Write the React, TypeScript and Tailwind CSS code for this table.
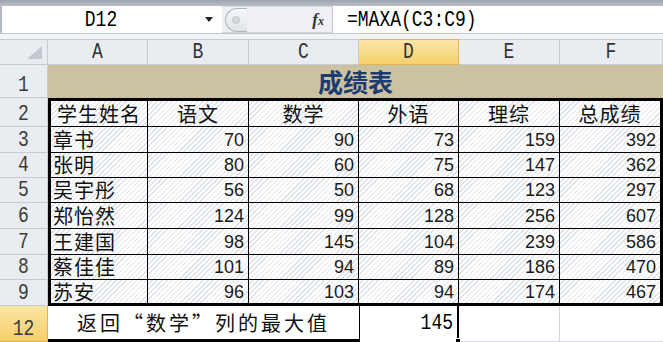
import React from "react";

const HATCH =
  "bg-[repeating-linear-gradient(135deg,#ffffff_0px,#ffffff_2.6px,#dde2e8_2.6px,#dde2e8_3.6px)]";

const COLW = ["w-[100px]", "w-[101px]", "w-[110px]", "w-[100px]", "w-[101px]", "w-[103px]"];
const COLB = [
  "border-l-[3px] border-r border-black",
  "border-r border-black",
  "border-r border-black",
  "border-r border-black",
  "border-r border-black",
  "border-r-[3px] border-black",
];

const MONO = "font-['Liberation_Mono',monospace]";
const CJK = "font-['Noto_Sans_CJK_SC','Noto_Sans',sans-serif]";
const NUM = "font-['Liberation_Sans',Arial,sans-serif]";

type Row = { n: number; h: string; name: string; v: number[]; b: string };

const rows: Row[] = [
  { n: 3, h: "h-[26px]", name: "章书", v: [70, 90, 73, 159, 392], b: "border-b" },
  { n: 4, h: "h-[25px]", name: "张明", v: [80, 60, 75, 147, 362], b: "border-b" },
  { n: 5, h: "h-[25px]", name: "吴宇彤", v: [56, 50, 68, 123, 297], b: "border-b" },
  { n: 6, h: "h-[26px]", name: "郑怡然", v: [124, 99, 128, 256, 607], b: "border-b" },
  { n: 7, h: "h-[26px]", name: "王建国", v: [98, 145, 104, 239, 586], b: "border-b" },
  { n: 8, h: "h-[25px]", name: "蔡佳佳", v: [101, 94, 89, 186, 470], b: "border-b" },
  { n: 9, h: "h-[26px]", name: "苏安", v: [96, 103, 94, 174, 467], b: "border-b-[3px]" },
];

function RowHead({ n, h, hl }: { n: number; h: string; hl?: boolean }) {
  return (
    <div
      className={`${h} w-[48px] shrink-0 flex items-end justify-center pb-[1px] border-r border-b ${
        hl
          ? "bg-gradient-to-b from-[#fbe6a2] to-[#f5cf69] border-[#e0b456]"
          : "bg-[#e9ecf0] border-[#c7ccd3]"
      } text-[#3a3a3a] text-[18px] leading-none ${MONO}`}
    >
      <span className="inline-block scale-y-[1.2] origin-bottom">{n}</span>
    </div>
  );
}

export default function App() {
  const headers = ["学生姓名", "语文", "数学", "外语", "理综", "总成绩"];
  const letters = ["A", "B", "C", "D", "E", "F"];
  return (
    <div className="w-[663px] h-[342px] overflow-hidden bg-white">
      {/* top strip */}
      <div className="h-[6px] bg-gradient-to-b from-[#9ca3ac] to-[#b9bfc7]" />
      {/* formula bar */}
      <div className="h-[28px] flex border-b border-[#c3c8cf] bg-white">
        <div className="w-[222px] flex items-center border-l-2 border-[#b4bac2]">
          <div className={`w-[198px] flex justify-center text-[18px] leading-none text-black ${MONO}`}>
            <span className="inline-block scale-y-[1.2]">D12</span>
          </div>
          <svg width="8" height="5" viewBox="0 0 8 5" className="ml-[5px]">
            <path d="M0 0H8L4 5Z" fill="#222" />
          </svg>
        </div>
        <div className="w-[111px] flex items-center bg-[#eef0f3] border-y border-[#d3d7dd] border-r border-r-[#c3c8cf]">
          <div className="ml-[3px] h-[24px] w-[22px] rounded-l-full border border-r-0 border-[#aeb4bc] bg-gradient-to-b from-[#f7f8fa] to-[#dfe3e8] flex items-center pl-[6px]">
            <div className="w-[8px] h-[8px] rounded-full bg-[#d5d9de] border border-[#c4c9cf]" />
          </div>
          <div className="flex-1" />
          <span className="mr-[8px] font-['Liberation_Serif',serif] italic font-bold text-[17px] text-[#333] leading-none">
            f<span className="text-[12px]">x</span>
          </span>
        </div>
        <div className={`flex-1 flex items-center pl-[14px] text-[18px] leading-none text-black ${MONO}`}>
          <span className="inline-block scale-y-[1.2]">=MAXA(C3:C9)</span>
        </div>
      </div>
      <div className="h-[5px] bg-[#f1f3f6]" />
      {/* column headers */}
      <div className="flex h-[26px]">
        <div className="w-[48px] shrink-0 relative bg-[#e9ecf0] border-r border-b border-t border-[#c7ccd3]">
          <svg width="15" height="13" viewBox="0 0 15 13" className="absolute right-[5px] bottom-[5px]">
            <path d="M0 13H15V0Z" fill="#c4c9cf" />
          </svg>
        </div>
        {letters.map((l, i) => (
          <div
            key={l}
            className={`${COLW[i]} shrink-0 flex items-center justify-center border-r border-b border-t ${
              i === 3
                ? "bg-gradient-to-b from-[#fbe7a6] to-[#f6d06b] border-[#e1b456]"
                : "bg-[#e9ecf0] border-[#c7ccd3]"
            } text-[18px] leading-none text-[#333] ${MONO}`}
          >
            <span className="inline-block scale-y-[1.2]">{l}</span>
          </div>
        ))}
      </div>
      {/* row 1 title */}
      <div className="flex h-[33px]">
        <RowHead n={1} h="h-[33px]" />
        <div className="flex-1 flex items-center justify-center bg-[#cbc3a0]">
          <span className={`text-[25px] font-bold text-[#1e3b70] leading-none ${CJK}`}>成绩表</span>
        </div>
      </div>
      {/* row 2 headers */}
      <div className="flex h-[29px]">
        <RowHead n={2} h="h-[29px]" />
        {headers.map((t, i) => (
          <div
            key={t}
            className={`${COLW[i]} shrink-0 ${COLB[i]} border-t-[3px] border-b ${HATCH} flex items-center justify-center tracking-[1px] text-[20px] leading-none text-[#111] ${CJK}`}
          >
            {t}
          </div>
        ))}
      </div>
      {/* data rows */}
      {rows.map((r) => (
        <div key={r.n} className={`flex ${r.h}`}>
          <RowHead n={r.n} h={r.h} />
          <div
            className={`${COLW[0]} shrink-0 ${COLB[0]} ${r.b} ${HATCH} flex items-center pl-[2px] tracking-[1px] text-[20px] leading-none text-[#111] ${CJK}`}
          >
            {r.name}
          </div>
          {r.v.map((v, i) => (
            <div
              key={i}
              className={`${COLW[i + 1]} shrink-0 ${COLB[i + 1]} ${r.b} ${HATCH} flex items-center justify-end pr-[4px] text-[18px] leading-none text-[#1a1a1a] ${NUM}`}
            >
              {v}
            </div>
          ))}
        </div>
      ))}
      {/* row 12 */}
      <div className="flex h-[36px]">
        <RowHead n={12} h="h-[36px]" hl />
        <div
          className={`w-[311px] shrink-0 bg-white border-b-[3px] border-black flex items-center justify-center tracking-[3px] text-[20px] leading-none text-[#111] ${CJK}`}
        >
          返回“数学”列的最大值
        </div>
        <div
          className={`w-[100px] shrink-0 relative bg-white border-l border-r-2 border-black flex items-center justify-end pr-[4px] pb-[2px] text-[18px] leading-none text-black ${MONO}`}
        >
          <span className="inline-block scale-y-[1.2]">145</span>
          <div className="absolute right-[-4px] bottom-[-1px] w-[6px] h-[5px] bg-black border border-white" />
        </div>
        <div className="w-[101px] shrink-0 border-r border-b border-[#d4d7dc]" />
        <div className="w-[103px] shrink-0 border-b border-[#d4d7dc]" />
      </div>
    </div>
  );
}
